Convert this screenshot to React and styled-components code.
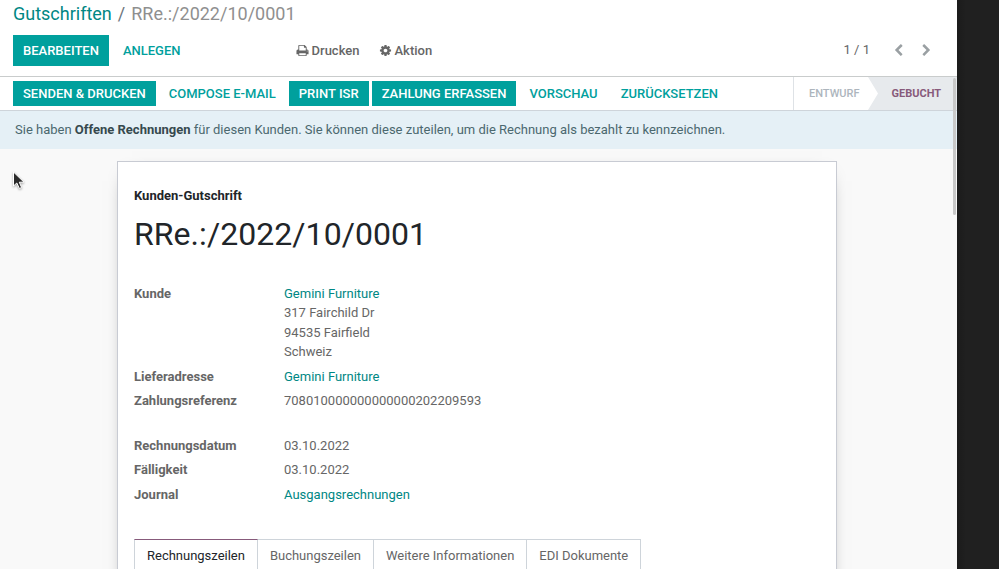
import React from "react";
import styled, { createGlobalStyle, css } from "styled-components";

const GlobalStyle = createGlobalStyle`
  *, *::before, *::after { box-sizing: border-box; }
  body {
    margin: 0;
    font: 400 13px/19.5px Roboto, "Noto Sans", sans-serif;
    color: #666;
    background: #202020;
    overflow: hidden;
  }
`;

const Desktop = styled.div`
  display: flex;
  height: 569px;
  background: linear-gradient(to right, #1b1b1b 957px, #202020 966px);
`;

const Window = styled.main`
  position: relative;
  display: flex;
  flex-direction: column;
  width: 957px;
  height: 569px;
  overflow: hidden;
  background: #f9f9f9;
`;

const ControlPanel = styled.header`
  flex: none;
  height: 77px;
  padding: 0 13px;
  background: #fff;
  border-bottom: 1px solid #c9cccc;
`;

const Breadcrumb = styled.nav`
  display: flex;
  height: 35px;
  font-size: 18px;
  line-height: 27px;
  color: #8f8f8f;
`;

const BreadcrumbLink = styled.a`
  color: #008784;
`;

const Separator = styled.span`
  padding: 0 6px;
  color: #6c757d;
`;

const ControlRow = styled.div`
  display: flex;
  align-items: center;
  height: 31px;
`;

const Button = styled.button`
  flex: none;
  height: ${(p) => (p.$tall ? 31 : 25)}px;
  margin: 0;
  padding: 0 10px;
  border: 0;
  font: 500 13px/19px Roboto, sans-serif;
  text-transform: uppercase;
  white-space: nowrap;
  color: #00a09d;
  background: transparent;
  ${(p) => p.$primary && css`
    color: #fff;
    background: #00a09d;
  `}
`;

const ActionMenus = styled.div`
  display: flex;
  gap: 19px;
  margin-left: 105px;
`;

const MenuButton = styled.span`
  display: flex;
  align-items: center;
  gap: 3px;
  font-weight: 500;
`;

const FormButtons = styled.div`
  display: flex;
  gap: 4px;
`;

const Pager = styled.div`
  display: flex;
  align-items: center;
  margin-left: auto;
  margin-right: 11px;
`;

const PagerValue = styled.span`
  margin: -2px 22px 0 0;
`;

const PagerArrows = styled.span`
  display: flex;
  gap: 15px;
  color: #9aa0a3;
`;

const Icon = styled.svg`
  display: block;
  flex: none;
  width: 13px;
  height: 13px;
  fill: currentColor;
`;

const StatusBar = styled.section`
  display: flex;
  flex: none;
  align-items: center;
  height: 34px;
  padding-left: 13px;
  background: #fff;
  border-bottom: 1px solid #ced4da;
`;

const StatusButtons = styled.div`
  display: flex;
  gap: 3px;
`;

const Stages = styled.div`
  display: flex;
  align-items: stretch;
  height: 33px;
  margin-left: auto;
  border-left: 1px solid #dee2e6;
  font-size: 11px;
  font-weight: 500;
  line-height: 33px;
`;

const Stage = styled.span`
  display: block;
  height: 33px;
  padding-left: 15px;
  width: 74px;
  color: #adb5bd;
  ${(p) => p.$active && css`
    width: 89px;
    padding-left: 23.5px;
    font-weight: 700;
    color: #875a7b;
    background: #e7eaed;
    clip-path: polygon(0 0, 100% 0, 100% 100%, 0 100%, 10px 50%);
  `}
`;

const Notice = styled.div`
  flex: none;
  height: 38px;
  padding: 9px 15px;
  color: #4b686f;
  background: #e5f0f6;
  strong { font-weight: 700; color: #36494e; }
`;

const Sheet = styled.article`
  flex: none;
  width: 720px;
  height: 500px;
  margin: 12px 0 0 117px;
  padding: 24px 16px;
  background: #fff;
  border: 1px solid #c8cbd3;
  box-shadow: 0 5px 20px -15px #000;
`;

const DocumentType = styled.div`
  font-weight: 700;
  color: #212529;
`;

const Title = styled.h1`
  margin: 9.5px 0 0;
  font-size: 32px;
  font-weight: 400;
  line-height: 39px;
  letter-spacing: 0.06px;
  color: #212529;
`;

const Fields = styled.dl`
  display: grid;
  grid-template-columns: 150px 1fr;
  row-gap: 5px;
  margin: ${(p) => p.$top}px 0 0;
`;

const Label = styled.dt`
  font-weight: 700;
`;

const Value = styled.dd`
  margin: 0;
`;

const Link = styled.a`
  color: #008784;
`;

const Tabs = styled.div`
  display: flex;
  margin-top: 35px;
`;

const Tab = styled.span`
  height: 34px;
  padding: 6px 12px;
  border: 1px solid #ced4da;
  border-bottom: 0;
  letter-spacing: -0.01px;
  & + & { border-left: 0; }
  ${(p) => p.$active && css`
    color: #212529;
    border-top-color: #875a7b;
  `}
`;

const ScrollThumb = styled.div`
  position: absolute;
  top: 78px;
  right: 1px;
  width: 3px;
  height: 137px;
  border-radius: 2px;
  background: #c8c8c8;
`;

const Cursor = styled.svg`
  position: absolute;
  left: 10px;
  top: 168px;
  width: 18px;
  height: 24px;
  filter: drop-shadow(0 1px 1px rgba(0, 0, 0, 0.35));
`;

const paths = {
  print: "M448 1536h896v-256h-896v256zm0-640h896v-384h-160q-40 0-68-28t-28-68v-160h-640v640zm1152 64q0-26-19-45t-45-19-45 19-19 45 19 45 45 19 45-19 19-45zm128 0v416q0 13-9.5 22.5t-22.5 9.5h-224v160q0 40-28 68t-68 28h-960q-40 0-68-28t-28-68v-160h-224q-13 0-22.5-9.5t-9.5-22.5v-416q0-79 56.5-135.5t135.5-56.5h64v-544q0-40 28-68t68-28h672q40 0 88 20t76 48l152 152q28 28 48 76t20 88v256h64q79 0 135.5 56.5t56.5 135.5z",
  cog: "M1152 896q0-106-75-181t-181-75-181 75-75 181 75 181 181 75 181-75 75-181zm512-109v222q0 12-8 23t-20 13l-185 28q-19 54-39 91 35 50 107 138 10 12 10 25t-9 23q-27 37-99 108t-94 71q-12 0-26-9l-138-108q-44 23-91 38-16 136-29 186-7 28-36 28h-222q-14 0-24.5-8.5t-11.5-21.5l-28-184q-49-16-90-37l-141 107q-10 9-25 9-14 0-25-11-126-114-165-168-7-10-7-23 0-12 8-23 15-21 51-66.5t54-70.5q-27-50-41-99l-183-27q-13-2-21-12.5t-8-23.5v-222q0-12 8-23t19-13l186-28q14-46 39-92-40-57-107-138-10-12-10-24 0-10 9-23 26-36 98.5-107.5t94.5-71.5q13 0 26 10l138 107q44-23 91-38 16-136 29-186 7-28 36-28h222q14 0 24.5 8.5t11.5 21.5l28 184q49 16 90 37l142-107q9-9 24-9 13 0 25 10 129 119 165 170 7 8 7 22 0 12-8 23-15 21-51 66.5t-54 70.5q26 50 41 98l183 28q13 2 21 12.5t8 23.5z",
  left: "M1427 301l-531 531 531 531q19 19 19 45t-19 45l-166 166q-19 19-45 19t-45-19l-742-742q-19-19-19-45t19-45l742-742q19-19 45-19t45 19l166 166q19 19 19 45t-19 45z",
  right: "M1363 877l-742 742q-19 19-45 19t-45-19l-166-166q-19-19-19-45t19-45l531-531-531-531q-19-19-19-45t19-45l166-166q19-19 45-19t45 19l742 742q19 19 19 45t-19 45z",
};

const Glyph = ({ name }) => (
  <Icon viewBox="0 0 1792 1792" aria-hidden="true">
    <path d={paths[name]} />
  </Icon>
);

const actions = [
  ["Senden & Drucken", true],
  ["Compose E-Mail", false],
  ["Print ISR", true],
  ["Zahlung erfassen", true],
  ["Vorschau", false],
  ["Zurücksetzen", false],
];

const tabs = ["Rechnungszeilen", "Buchungszeilen", "Weitere Informationen", "EDI Dokumente"];

export default function App() {
  return (
    <Desktop>
      <GlobalStyle />
      <Window>
        <ControlPanel>
          <Breadcrumb>
            <BreadcrumbLink>Gutschriften</BreadcrumbLink>
            <Separator>/</Separator>
            <span>RRe.:/2022/10/0001</span>
          </Breadcrumb>
          <ControlRow>
            <FormButtons>
              <Button $primary $tall>Bearbeiten</Button>
              <Button $tall>Anlegen</Button>
            </FormButtons>
            <ActionMenus>
              <MenuButton><Glyph name="print" />Drucken</MenuButton>
              <MenuButton><Glyph name="cog" />Aktion</MenuButton>
            </ActionMenus>
            <Pager>
              <PagerValue>1 / 1</PagerValue>
              <PagerArrows><Glyph name="left" /><Glyph name="right" /></PagerArrows>
            </Pager>
          </ControlRow>
        </ControlPanel>
        <StatusBar>
          <StatusButtons>
            {actions.map(([label, primary]) => (
              <Button key={label} $primary={primary}>{label}</Button>
            ))}
          </StatusButtons>
          <Stages>
            <Stage>ENTWURF</Stage>
            <Stage $active>GEBUCHT</Stage>
          </Stages>
        </StatusBar>
        <Notice>
          Sie haben <strong>Offene Rechnungen</strong> für diesen Kunden. Sie können diese zuteilen, um die Rechnung als bezahlt zu kennzeichnen.
        </Notice>
        <Sheet>
          <DocumentType>Kunden-Gutschrift</DocumentType>
          <Title>RRe.:/2022/10/0001</Title>
          <Fields $top={29.5}>
            <Label>Kunde</Label>
            <Value>
              <Link>Gemini Furniture</Link><br />
              317 Fairchild Dr<br />
              94535 Fairfield<br />
              Schweiz
            </Value>
            <Label>Lieferadresse</Label>
            <Value><Link>Gemini Furniture</Link></Value>
            <Label>Zahlungsreferenz</Label>
            <Value>708010000000000000202209593</Value>
          </Fields>
          <Fields $top={25}>
            <Label>Rechnungsdatum</Label>
            <Value>03.10.2022</Value>
            <Label>Fälligkeit</Label>
            <Value>03.10.2022</Value>
            <Label>Journal</Label>
            <Value><Link>Ausgangsrechnungen</Link></Value>
          </Fields>
          <Tabs>
            {tabs.map((label, i) => (
              <Tab key={label} $active={i === 0}>{label}</Tab>
            ))}
          </Tabs>
        </Sheet>
        <ScrollThumb />
        <Cursor viewBox="0 0 18 24" aria-hidden="true">
          <path
            d="M3.5 4V18L6.8 15L9.4 20.5L11.6 19.5L9.3 14.2H14Z"
            fill="#2a2a2a"
            stroke="#fff"
            strokeWidth="1"
          />
        </Cursor>
      </Window>
    </Desktop>
  );
}
